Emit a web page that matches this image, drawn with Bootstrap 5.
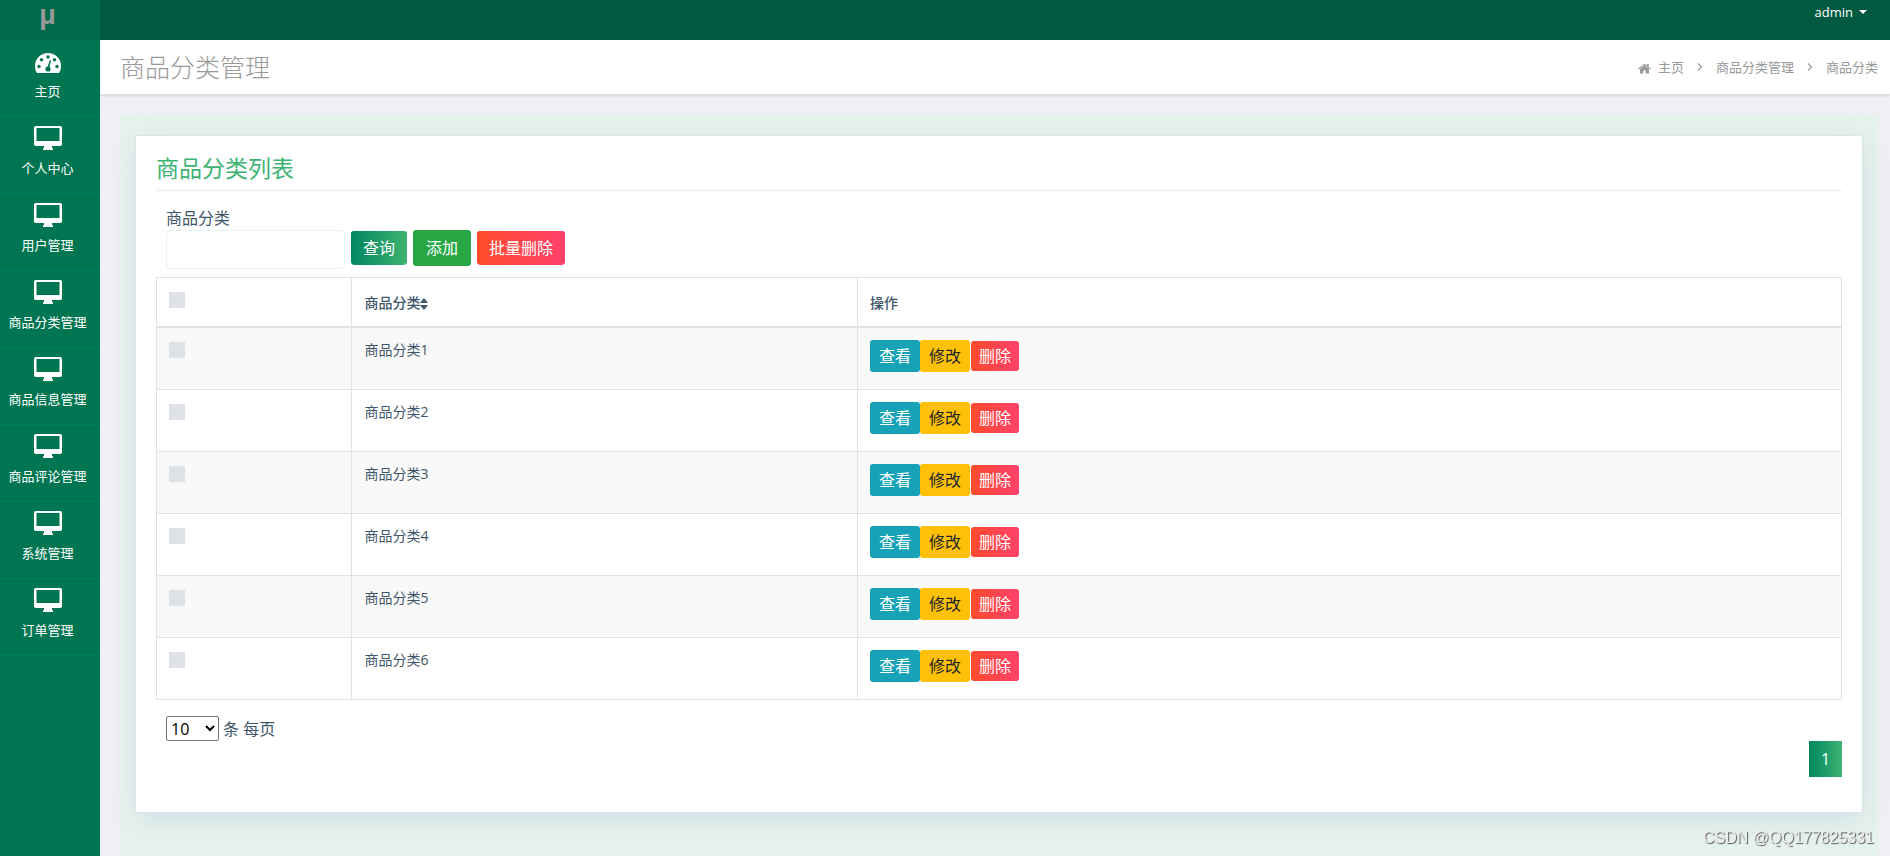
<!DOCTYPE html>
<html lang="zh-CN">
<head>
<meta charset="utf-8">
<meta name="viewport" content="width=device-width, initial-scale=1">
<title>商品分类管理</title>
<link rel="stylesheet" href="https://cdn.jsdelivr.net/npm/bootstrap@5.3.0/dist/css/bootstrap.min.css">
<style>
body { font-family: "Open Sans", "Noto Sans CJK SC", sans-serif; font-size: 16px; line-height: 24px; color: #3e5569; background: #eff0f5; }
.side { width: 100px; background: #007551; }
.side-logo { height: 40px; background: #006a4b; color: #999; font-family: "Liberation Sans", sans-serif; font-size: 27px; font-weight: 700; line-height: 31px; padding-right: 5px; }
.side-link { height: 77px; border-bottom: 1px solid #00805a; color: #fff; font-size: 13px; line-height: 20px; padding: 9px 5px 0 0; gap: 8px; }
.side-link svg { height: 24px; }
.topbar { height: 40px; background: #005a40; }
.user-btn { color: #fff; font-size: 13px; font-weight: 500; line-height: 20px; padding: 2px 23px 0 0; }
.user-btn:hover { color: #fff; }
.user-btn::after { margin-left: 6px; border-width: 4px 4px 0; }
.titlebar { height: 55px; background: #fff; border-bottom: 1px solid #dcdde2; box-shadow: 0 1px 2px rgba(0,0,0,.1); padding: 0 12px 1px 20px; color: #999; }
.titlebar h1 { font-size: 25px; font-weight: 300; line-height: 32px; }
.crumbs { font-size: 13px; gap: 13px; }
.crumbs a { color: #999; text-decoration: none; }
.crumbs a svg { margin-right: 7px; }
.wrap { background: #e6f3ec; margin: 20px 12px 0 20px; padding: 20px 15px 40px; }
.panel { background: #fff; border: 1px solid #dce3ec; border-radius: 3px; box-shadow: 0 8px 28px rgba(180,195,225,.4); padding: 18px 20px 35px; }
.panel h2 { font-size: 23px; font-weight: 400; line-height: 28px; color: #3cb371; padding-bottom: 8px; border-bottom: 1px solid #e9ecef; margin-bottom: 15px; }
.inset { padding: 0 10px; }
.tools { gap: 6px; }
.search-box { width: 179px; height: 39px; border: 1px solid #e6f3f0; border-radius: 4px; }
.act { border: 0; font-size: 16px; line-height: 24px; border-radius: 3px; color: #fff; padding: 5px 12px; }
.tools .act { border-top: 1px solid transparent; background-clip: padding-box; }
.tools .act-add { padding: 6px 13px; border: 0; }
.act-add { background: #28a745; }
.act-find, .page-now { background: linear-gradient(90deg, #028760, #3cb371); }
.act-del { background: linear-gradient(90deg, #ff4b2b, #ff416c); }
.act-view { background: #17a2b8; }
.act-edit { background: #ffc107; color: #212529; }
.grid-table { font-size: 14px; line-height: 20px; color: #3e5569; border-color: #dee2e6; --bs-table-striped-bg: #f9f9f9; --bs-table-striped-color: #3e5569; --bs-table-color: #3e5569; table-layout: fixed; }
.grid-table th { padding: 15px 12px 13px; font-weight: 500; height: 49px; vertical-align: top; }
.grid-table th:first-child { padding-top: 14px; }
.grid-table td { padding: 12px 12px 17px; vertical-align: top; }
.grid-table thead { border-bottom: 2px solid #dee2e6; }
.grid-table .act { padding: 4px 9px; }
.grid-table .act-del { padding: 3px 8px; margin-left: 1px; }
.tick { appearance: none; display: block; width: 16px; height: 16px; margin: 2px 0 0; background: #dee2e6; }
.tick:checked { background: #3cb371; }
.col-tick { width: 11.6%; }
.col-name { width: 30%; }
.size-select { width: 53px; height: 25px; border: 1px solid #767676; border-radius: 2px; background: #fff; color: #000; font-size: 16px; line-height: 20px; }
.page-now { width: 33px; height: 36px; color: #fff; text-decoration: none; }
.stamp { position: fixed; right: 16px; bottom: 8px; font: 16px/20px "Liberation Sans", sans-serif; color: #eee; text-shadow: 1px 1px 1px #555; }
</style>
</head>
<body>
<svg class="d-none" aria-hidden="true">
  <symbol id="desktop" viewBox="0 0 28 24"><path fill="currentColor" fill-rule="evenodd" d="M1.800 0H26.200Q28 0 28 1.800V18.200Q28 20 26.200 20H18V21.500Q18.300 22.300 19 22.600V24H9V22.600Q9.700 22.300 10 21.500V20H1.800Q0 20 0 18.200V1.800Q0 0 1.800 0ZM2.500 2V15H25.500V2Z"/></symbol>
  <symbol id="dash" viewBox="0 0 26 24"><path fill="currentColor" d="M2 24C.7 22 0 20 0 17a13 13 0 0 1 26 0c0 3-.7 5-2 7Z"/><g fill="#007551"><circle cx="4" cy="17.500" r="1.700"/><circle cx="6.500" cy="10.800" r="1.700"/><circle cx="13" cy="8" r="1.700"/><circle cx="19.500" cy="10.800" r="1.700"/><circle cx="22" cy="17.500" r="1.700"/><circle cx="13" cy="20" r="2.600"/><path d="M12.200 19 14.700 11.200 16 11.600 14 20Z"/></g></symbol>
  <symbol id="home" viewBox="0 0 13 11"><path fill="currentColor" d="M6.500 2.300 11 6v4.500H7.700V7.300H5.300v3.200H2V6ZM0 5.800 6.500.4 9 2.500V1h1.700v2.900L13 5.800l-.7.8-5.800-4.800L.7 6.600Z"/></symbol>
  <symbol id="chev" viewBox="0 0 6 8"><path fill="none" stroke="currentColor" stroke-width="1.200" d="M1 .5 4.500 4 1 7.500"/></symbol>
  <symbol id="sort" viewBox="0 0 8 12"><path fill="currentColor" d="M0 5 4 0l4 5ZM0 7h8l-4 5Z"/></symbol>
</svg>
<div class="d-flex min-vh-100">
  <nav class="side flex-shrink-0 d-flex flex-column">
    <div class="side-logo text-center">μ</div>
    <a href="#" class="side-link d-flex flex-column align-items-center text-decoration-none"><svg width="26"><use href="#dash"/></svg>主页</a>
    <a href="#" class="side-link d-flex flex-column align-items-center text-decoration-none"><svg width="28"><use href="#desktop"/></svg>个人中心</a>
    <a href="#" class="side-link d-flex flex-column align-items-center text-decoration-none"><svg width="28"><use href="#desktop"/></svg>用户管理</a>
    <a href="#" class="side-link d-flex flex-column align-items-center text-decoration-none"><svg width="28"><use href="#desktop"/></svg>商品分类管理</a>
    <a href="#" class="side-link d-flex flex-column align-items-center text-decoration-none"><svg width="28"><use href="#desktop"/></svg>商品信息管理</a>
    <a href="#" class="side-link d-flex flex-column align-items-center text-decoration-none"><svg width="28"><use href="#desktop"/></svg>商品评论管理</a>
    <a href="#" class="side-link d-flex flex-column align-items-center text-decoration-none"><svg width="28"><use href="#desktop"/></svg>系统管理</a>
    <a href="#" class="side-link d-flex flex-column align-items-center text-decoration-none"><svg width="28"><use href="#desktop"/></svg>订单管理</a>
  </nav>
  <div class="flex-grow-1 d-flex flex-column">
    <header class="topbar d-flex justify-content-end align-items-start">
      <button type="button" class="user-btn btn border-0 dropdown-toggle" data-bs-toggle="dropdown">admin</button>
      <ul class="dropdown-menu"><li><a class="dropdown-item" href="#">退出</a></li></ul>
    </header>
    <div class="titlebar d-flex align-items-center justify-content-between">
      <h1 class="m-0">商品分类管理</h1>
      <div class="crumbs d-flex align-items-center">
        <a href="#"><svg width="13" height="11"><use href="#home"/></svg>主页</a>
        <svg width="6" height="8"><use href="#chev"/></svg>
        <a href="#">商品分类管理</a>
        <svg width="6" height="8"><use href="#chev"/></svg>
        <span>商品分类</span>
      </div>
    </div>
    <main class="wrap flex-grow-1">
      <section class="panel">
        <h2>商品分类列表</h2>
        <form class="inset">
          <label for="kind" class="d-block">商品分类</label>
          <div class="tools d-flex align-items-start mb-2">
            <input id="kind" type="text" class="search-box">
            <button type="button" class="act act-find">查询</button>
            <button type="button" class="act act-add">添加</button>
            <button type="button" class="act act-del">批量删除</button>
          </div>
        </form>
        <table class="grid-table table table-bordered table-striped mb-3">
          <colgroup><col class="col-tick"><col class="col-name"><col></colgroup>
          <thead><tr><th><input type="checkbox" class="tick m-0" aria-label="全选"></th><th>商品分类<svg width="8" height="12"><use href="#sort"/></svg></th><th>操作</th></tr></thead>
          <tbody>
            <tr><td><input type="checkbox" class="tick" aria-label="商品分类1"></td><td>商品分类1</td><td><div class="d-flex align-items-center"><button class="act act-view">查看</button><button class="act act-edit">修改</button><button class="act act-del">删除</button></div></td></tr>
            <tr><td><input type="checkbox" class="tick" aria-label="商品分类2"></td><td>商品分类2</td><td><div class="d-flex align-items-center"><button class="act act-view">查看</button><button class="act act-edit">修改</button><button class="act act-del">删除</button></div></td></tr>
            <tr><td><input type="checkbox" class="tick" aria-label="商品分类3"></td><td>商品分类3</td><td><div class="d-flex align-items-center"><button class="act act-view">查看</button><button class="act act-edit">修改</button><button class="act act-del">删除</button></div></td></tr>
            <tr><td><input type="checkbox" class="tick" aria-label="商品分类4"></td><td>商品分类4</td><td><div class="d-flex align-items-center"><button class="act act-view">查看</button><button class="act act-edit">修改</button><button class="act act-del">删除</button></div></td></tr>
            <tr><td><input type="checkbox" class="tick" aria-label="商品分类5"></td><td>商品分类5</td><td><div class="d-flex align-items-center"><button class="act act-view">查看</button><button class="act act-edit">修改</button><button class="act act-del">删除</button></div></td></tr>
            <tr><td><input type="checkbox" class="tick" aria-label="商品分类6"></td><td>商品分类6</td><td><div class="d-flex align-items-center"><button class="act act-view">查看</button><button class="act act-edit">修改</button><button class="act act-del">删除</button></div></td></tr>
          </tbody>
        </table>
        <div class="inset d-flex align-items-center">
          <select id="size" class="size-select me-1"><option>10</option><option>20</option></select>
          <label for="size">条 每页</label>
        </div>
        <div class="d-flex justify-content-end"><a href="#" class="page-now d-flex align-items-center justify-content-center">1</a></div>
      </section>
    </main>
  </div>
</div>
<div class="stamp">CSDN @QQ177825331</div>
<script src="https://cdn.jsdelivr.net/npm/bootstrap@5.3.0/dist/js/bootstrap.bundle.min.js"></script>
</body>
</html>
